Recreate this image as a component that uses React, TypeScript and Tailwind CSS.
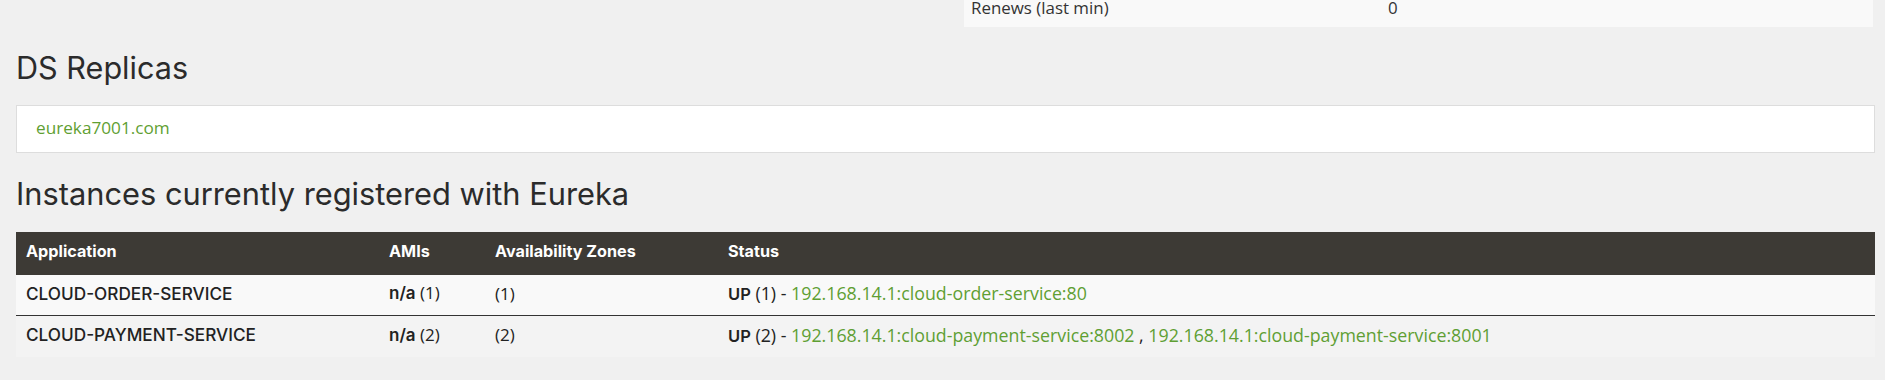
import React from "react";

const GREEN = "text-[#5f9f33]";

type Inst = { app: string; count: number; links: string[] };

const instances: Inst[] = [
  { app: "CLOUD-ORDER-SERVICE", count: 1, links: ["192.168.14.1:cloud-order-service:80"] },
  {
    app: "CLOUD-PAYMENT-SERVICE",
    count: 2,
    links: ["192.168.14.1:cloud-payment-service:8002", "192.168.14.1:cloud-payment-service:8001"],
  },
];

export default function App() {
  return (
    <div className="min-h-[380px] w-full overflow-hidden bg-[#f0f0f0] pl-[16px] pr-[10px] text-[#333] font-['Open_Sans',sans-serif]">
      {/* top stats table (scrolled) */}
      <div className="grid grid-cols-[1fr_911px]">
        <div />
        <div className="-mt-[12px] mr-[2px] flex h-[39px] items-center bg-[#f9f9f9] text-[16.9px] leading-[16px]">
          <div className="w-[417px] pl-[7px]">Renews (last min)</div>
          <div className="pl-[7px]">0</div>
        </div>
      </div>

      {/* DS Replicas */}
      <h2 className="mt-[23px] mb-[19px] font-['Inter',sans-serif] text-[30.6px] leading-[36px] font-normal text-[#2b2b2b]">
        DS Replicas
      </h2>
      <div className="flex h-[48px] items-center border border-[#dddddd] bg-white pb-[2px] pl-[19px]">
        <a className={`${GREEN} text-[17.2px] leading-[24px]`}>eureka7001.com</a>
      </div>

      {/* Instances */}
      <h2 className="mt-[23px] mb-[20px] font-['Inter',sans-serif] text-[30.8px] leading-[36px] font-normal text-[#2b2b2b]">
        Instances currently registered with Eureka
      </h2>
      <div className="w-full">
        <div className="flex h-[43px] items-center bg-[#3d3a35] pb-[5px] font-['Inter',sans-serif] text-[16.2px] font-bold text-white">
          <div className="w-[363px] pl-[10px]">Application</div>
          <div className="w-[106px] pl-[10px]">AMIs</div>
          <div className="w-[233px] pl-[10px]">Availability Zones</div>
          <div className="flex-1 pl-[10px]">Status</div>
        </div>
        {instances.map((it, i) => (
          <div
            key={it.app}
            className={`flex h-[41px] items-center pb-[3px] ${
              i === 0 ? "bg-[#f9f9f9] border-b border-[#333333]" : "bg-[#f3f3f3]"
            }`}
          >
            <div className="w-[363px] pl-[10px] font-['Inter',sans-serif] text-[17.2px] font-medium text-[#222]">
              {it.app}
            </div>
            <div className="w-[106px] pl-[10px] text-[17px] text-[#222]">
              <b className="font-['Inter',sans-serif] font-semibold">n/a</b> ({it.count})
            </div>
            <div className="w-[233px] pl-[10px] text-[17px] text-[#222]">({it.count})</div>
            <div className="flex-1 pl-[10px] text-[17.8px] text-[#222]">
              <b className="font-['Inter',sans-serif] text-[16.5px] font-semibold">UP</b> ({it.count}) -{" "}
              {it.links.map((l, j) => (
                <React.Fragment key={l}>
                  {j > 0 && " , "}
                  <a className={GREEN}>{l}</a>
                </React.Fragment>
              ))}
            </div>
          </div>
        ))}
      </div>
    </div>
  );
}
